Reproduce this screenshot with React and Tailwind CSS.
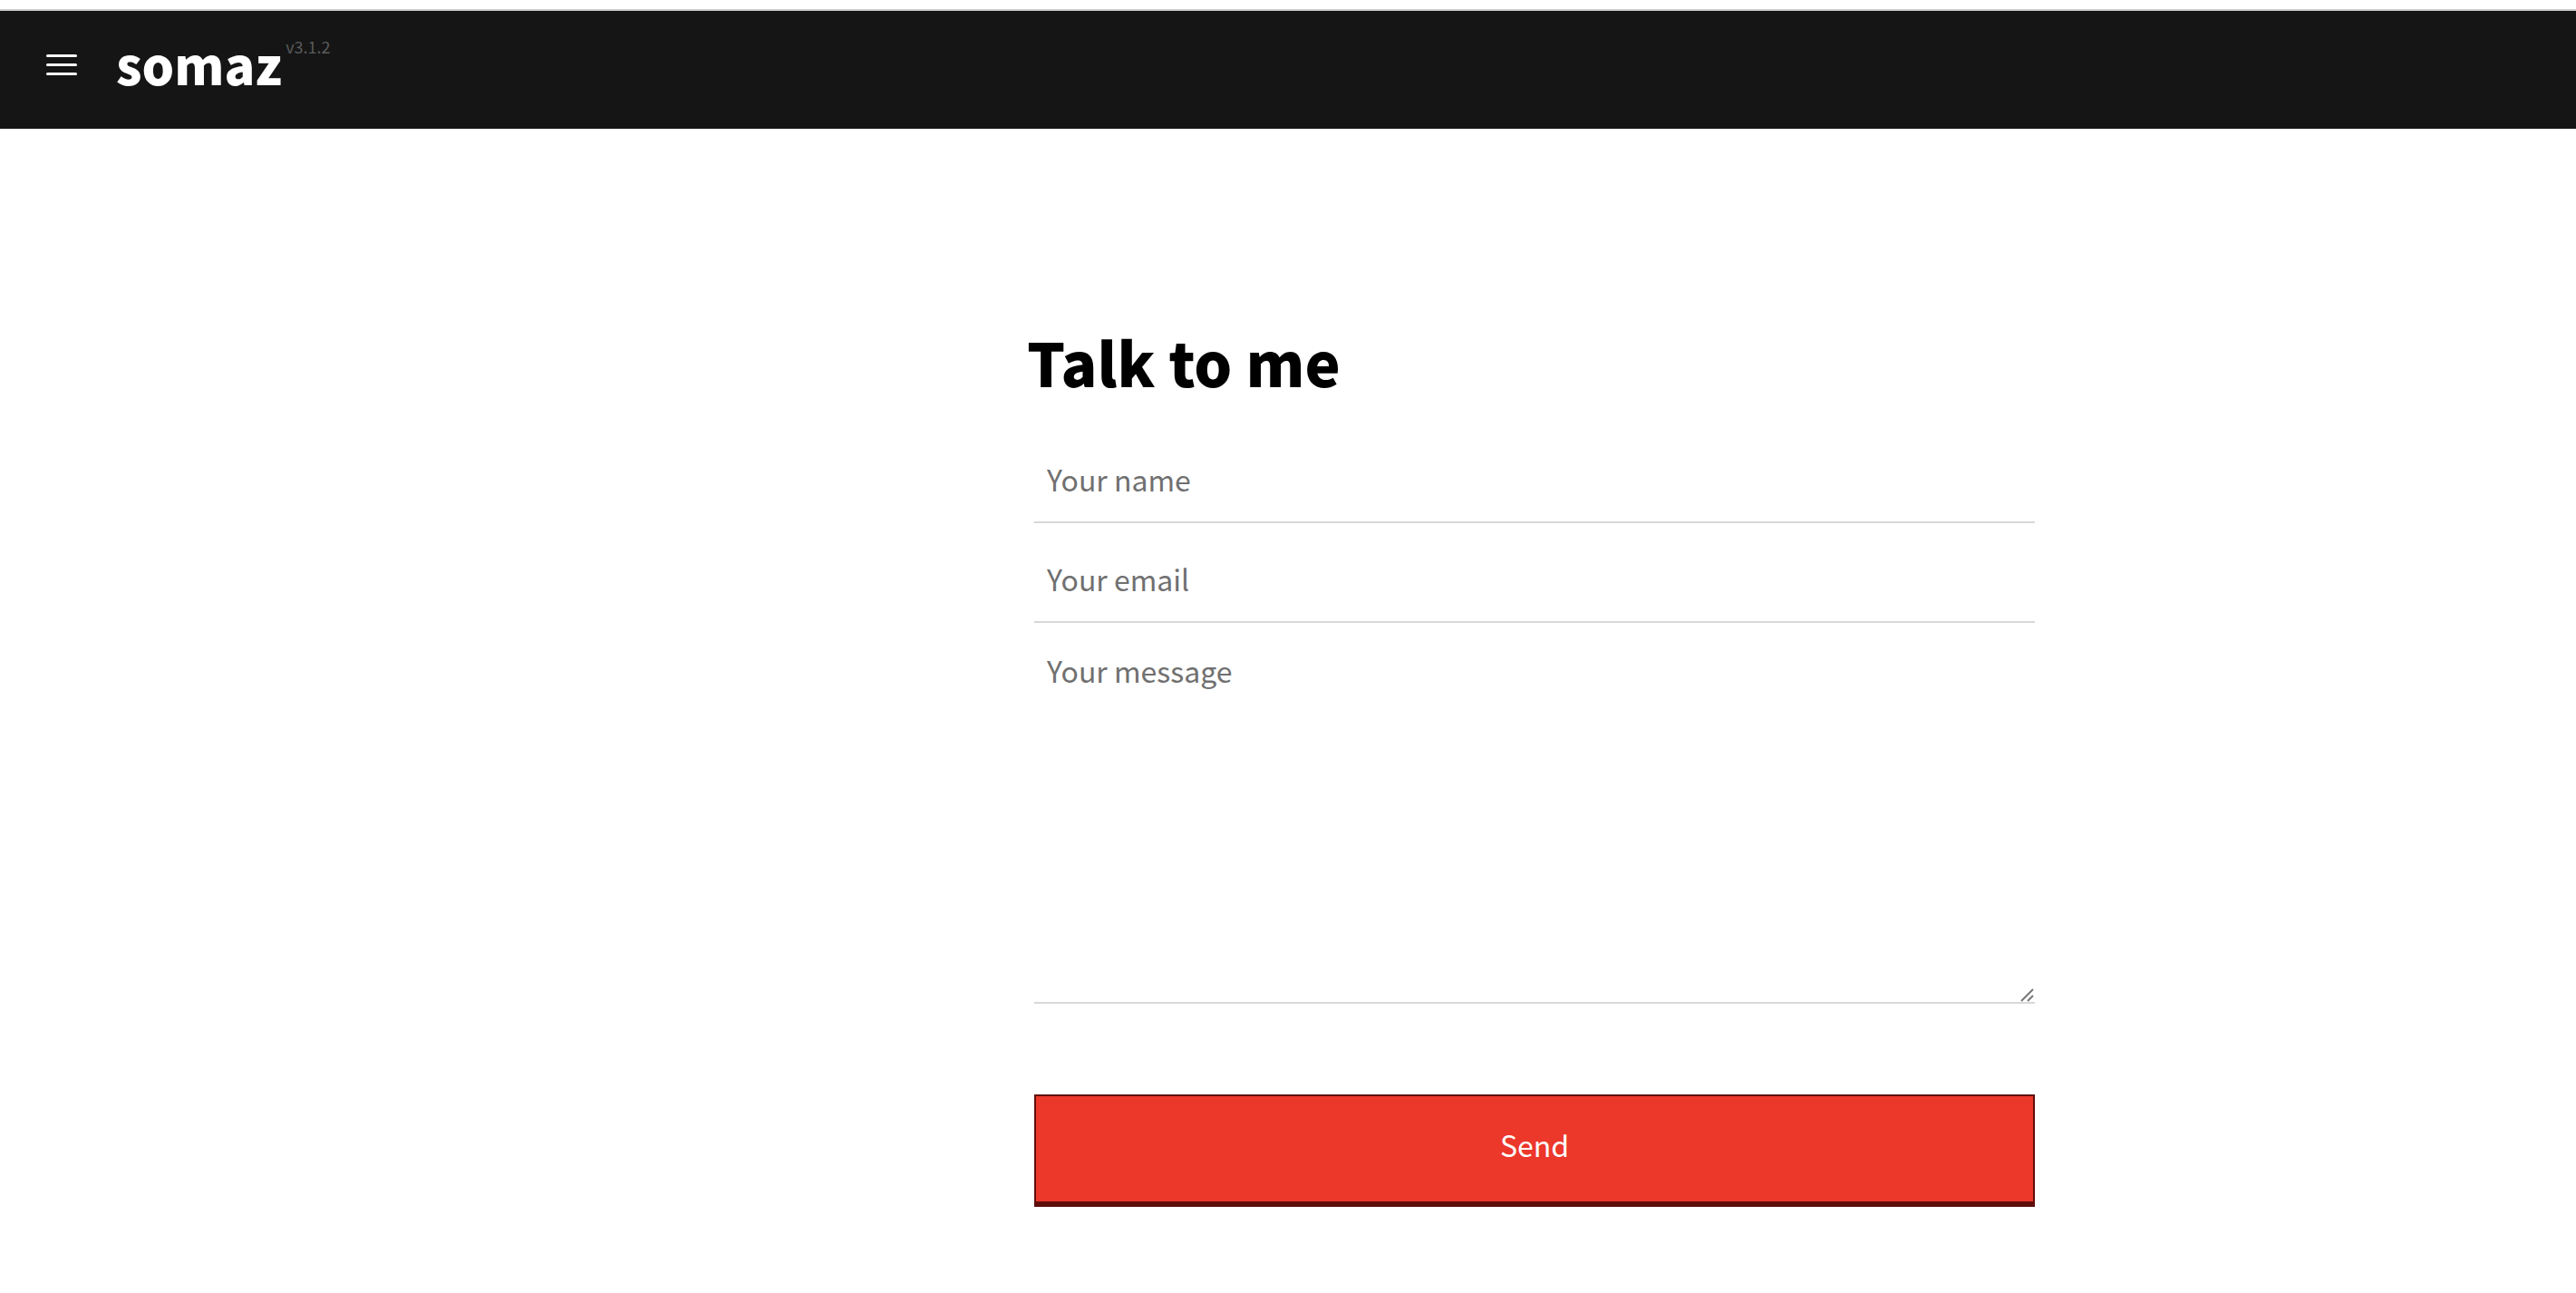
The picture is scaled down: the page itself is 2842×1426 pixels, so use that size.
import React from 'react';

const App = () => {
    return (
        <div className="min-h-[1426px] bg-white font-['Noto_Sans_CJK_SC','Noto_Sans',sans-serif]">
            <div className="h-[10px] bg-white" />
            <header className="h-[132px] bg-[#151515] border-t-2 border-[#cccccc] flex items-start pl-[51px]">
                <button className="mt-[48px] w-[34px] flex flex-col gap-[7px]">
                    <span className="block h-[3px] w-[34px] rounded-full bg-white" />
                    <span className="block h-[3px] w-[34px] rounded-full bg-white" />
                    <span className="block h-[3px] w-[34px] rounded-full bg-white" />
                </button>
                <div className="ml-[43px] mt-[18px] flex items-start">
                    <span className="text-[56px] leading-[80px] font-black text-white">somaz</span>
                    <span className="ml-[4px] mt-[11px] text-[18px] leading-5 text-[#5a5a5a]">v3.1.2</span>
                </div>
            </header>
            <main className="w-[1112px] ml-[1133px] pt-[208px]">
                <h1 className="text-[66px] leading-[96px] font-black text-black">Talk to me</h1>
                <form className="ml-[8px] w-[1104px] mt-[37px] flex flex-col">
                    <input placeholder="Your name" className="h-[94px] pl-[14px] pr-[14px] pb-[3px] border-b-2 border-[#d8d8d8] text-[32px] outline-none placeholder:text-[#707070]" />
                    <input placeholder="Your email" className="mt-[16px] h-[94px] pl-[14px] pr-[14px] pb-[3px] border-b-2 border-[#d8d8d8] text-[32px] outline-none placeholder:text-[#707070]" />
                    <div className="relative flex">
                        <textarea placeholder="Your message" className="w-full h-[420px] px-[14px] py-[28px] border-b-2 border-[#d8d8d8] text-[32px] outline-none resize-none placeholder:text-[#707070]" />
                        <svg className="absolute right-0 bottom-[2px] w-[16px] h-[16px]" viewBox="0 0 16 16">
                            <path d="M1 15 L14 2 M8 15 L14 9" stroke="#777777" strokeWidth="2" fill="none" />
                        </svg>
                    </div>
                    <button type="button" className="mt-[100px] h-[124px] pb-[11px] bg-[#ec372b] border-2 border-[#5f0e0b] border-b-[6px] text-white text-[32px]">Send</button>
                </form>
            </main>
        </div>
    );
};

export default App;
